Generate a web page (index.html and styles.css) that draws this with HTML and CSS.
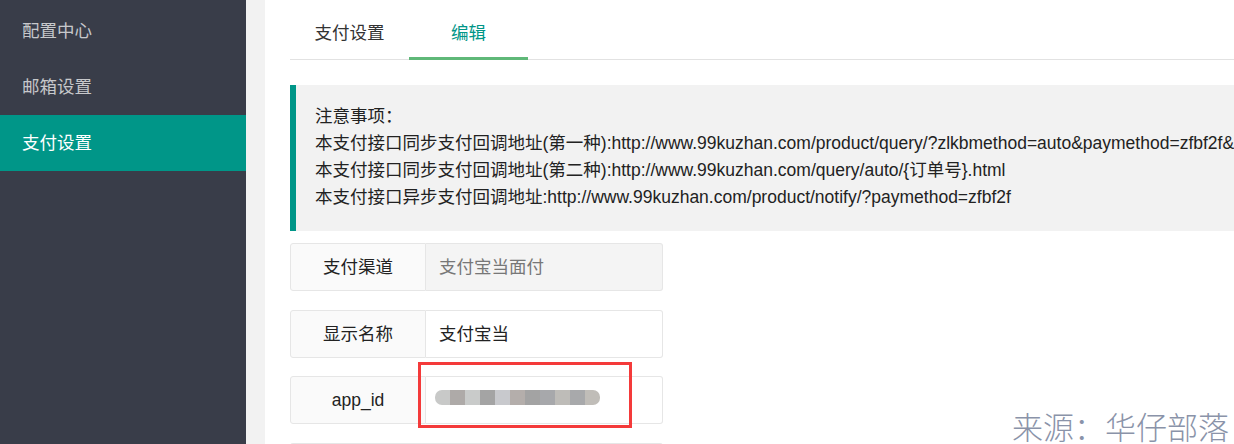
FILE: index.html
```html
<!DOCTYPE html>
<html lang="zh-CN">
<head>
    <meta charset="UTF-8">
    <meta name="viewport" content="width=device-width, initial-scale=1.0">
    <title>支付设置</title>
    <link rel="stylesheet" href="styles.css">
</head>
<body>
    <div class="layout">
        <div class="side">
            <div class="nav-item">配置中心</div>
            <div class="nav-item">邮箱设置</div>
            <div class="nav-item active">支付设置</div>
        </div>
        <div class="gutter"></div>
        <div class="main">
            <ul class="tabs">
                <li class="tab">支付设置</li>
                <li class="tab active">编辑</li>
            </ul>

            <div class="notice">
                <div>注意事项：</div>
                <div>本支付接口同步支付回调地址(第一种):http://www.99kuzhan.com/product/query/?zlkbmethod=auto&amp;paymethod=zfbf2f&amp;</div>
                <div>本支付接口同步支付回调地址(第二种):http://www.99kuzhan.com/query/auto/{订单号}.html</div>
                <div>本支付接口异步支付回调地址:http://www.99kuzhan.com/product/notify/?paymethod=zfbf2f</div>
            </div>

            <div class="form-row">
                <div class="label">支付渠道</div>
                <div class="input disabled">支付宝当面付</div>
            </div>
            <div class="form-row">
                <div class="label">显示名称</div>
                <div class="input">支付宝当</div>
            </div>
            <div class="form-row">
                <div class="label">app_id</div>
                <div class="input">
                    <!-- blurred value -->
                    <div class="mosaic">
                        <span style="background:#c8c9c8"></span>
                        <span style="background:#aeaaa8"></span>
                        <span style="background:#c9cbca"></span>
                        <span style="background:#a4a4a4"></span>
                        <span style="background:#c8c9cd"></span>
                        <span style="background:#b4aeab"></span>
                        <span style="background:#a3a3a3"></span>
                        <span style="background:#a7a8ab"></span>
                        <span style="background:#bebcb8"></span>
                        <span style="background:#a8a9ab"></span>
                        <span style="background:#c0bdb8"></span>
                    </div>
                </div>
            </div>
            <div class="form-row empty"></div>
        </div>
    </div>

    <!-- annotation overlays -->
    <div class="mark"></div>
    <div class="watermark">来源：华仔部落</div>
</body>
</html>
```

FILE: styles.css
```css
body {
    margin: 0;
    padding: 0;
    height: 444px;
    overflow: hidden;
    font-family: "Liberation Sans", "Noto Sans CJK SC", sans-serif;
    font-size: 17.5px;
    color: #222;
    background-color: #fff;
}

.layout {
    display: flex;
    height: 444px;
}

.side {
    width: 246px;
    flex-shrink: 0;
    background-color: #393D49;
    padding-top: 3px;
}

.nav-item {
    height: 56px;
    line-height: 56px;
    padding-left: 22px;
    color: rgba(255, 255, 255, 0.72);
}

.nav-item.active {
    background-color: #009688;
    color: #fff;
}

.gutter {
    width: 19px;
    flex-shrink: 0;
    background-color: #f2f2f2;
}

.main {
    flex: 1;
    padding-left: 25px;
    overflow: hidden;
}

.tabs {
    display: flex;
    list-style: none;
    margin: 0;
    padding: 0;
    height: 59px;
    border-bottom: 1px solid #e2e2e2;
}

.tab {
    width: 119px;
    height: 48px;
    padding-top: 9px;
    line-height: 48px;
    text-align: center;
    color: #333;
}

.tab.active {
    color: #009688;
    border-bottom: 3px solid #5FB878;
}

.notice {
    margin: 25px 0 12px;
    height: 146px;
    box-sizing: border-box;
    padding: 18px 0 0 19px;
    border-left: 6px solid #009688;
    background-color: #f2f2f2;
    line-height: 27px;
    white-space: nowrap;
    overflow: hidden;
}

.form-row {
    display: flex;
    width: 373px;
    height: 48px;
    margin-bottom: 18.5px;
}

.form-row.empty {
    border-top: 1px solid #e6e6e6;
    border-radius: 3px;
}

.label,
.input {
    box-sizing: border-box;
    height: 48px;
    line-height: 46px;
    border: 1px solid #e6e6e6;
}

.label {
    width: 136px;
    text-align: center;
    background-color: #fafafa;
    border-radius: 3px 0 0 3px;
}

.input {
    flex: 1;
    border-left: none;
    border-radius: 0 3px 3px 0;
    padding-left: 13px;
}

.input.disabled {
    background-color: #f4f4f4;
    color: #777;
}

.mosaic {
    display: flex;
    margin: 13px 0 0 -4px;
    width: 165px;
    height: 15px;
    border-radius: 7px;
    overflow: hidden;
}

.mosaic span {
    width: 15px;
    height: 15px;
}

.mark {
    position: absolute;
    left: 418px;
    top: 362px;
    width: 208px;
    height: 60px;
    border: 3px solid #f43a3a;
}

.watermark {
    position: absolute;
    left: 1012px;
    top: 410px;
    font-family: "Noto Sans CJK SC", sans-serif;
    font-weight: 300;
    font-size: 31px;
    line-height: 31px;
    color: #8a93a9;
    white-space: nowrap;
}
```
